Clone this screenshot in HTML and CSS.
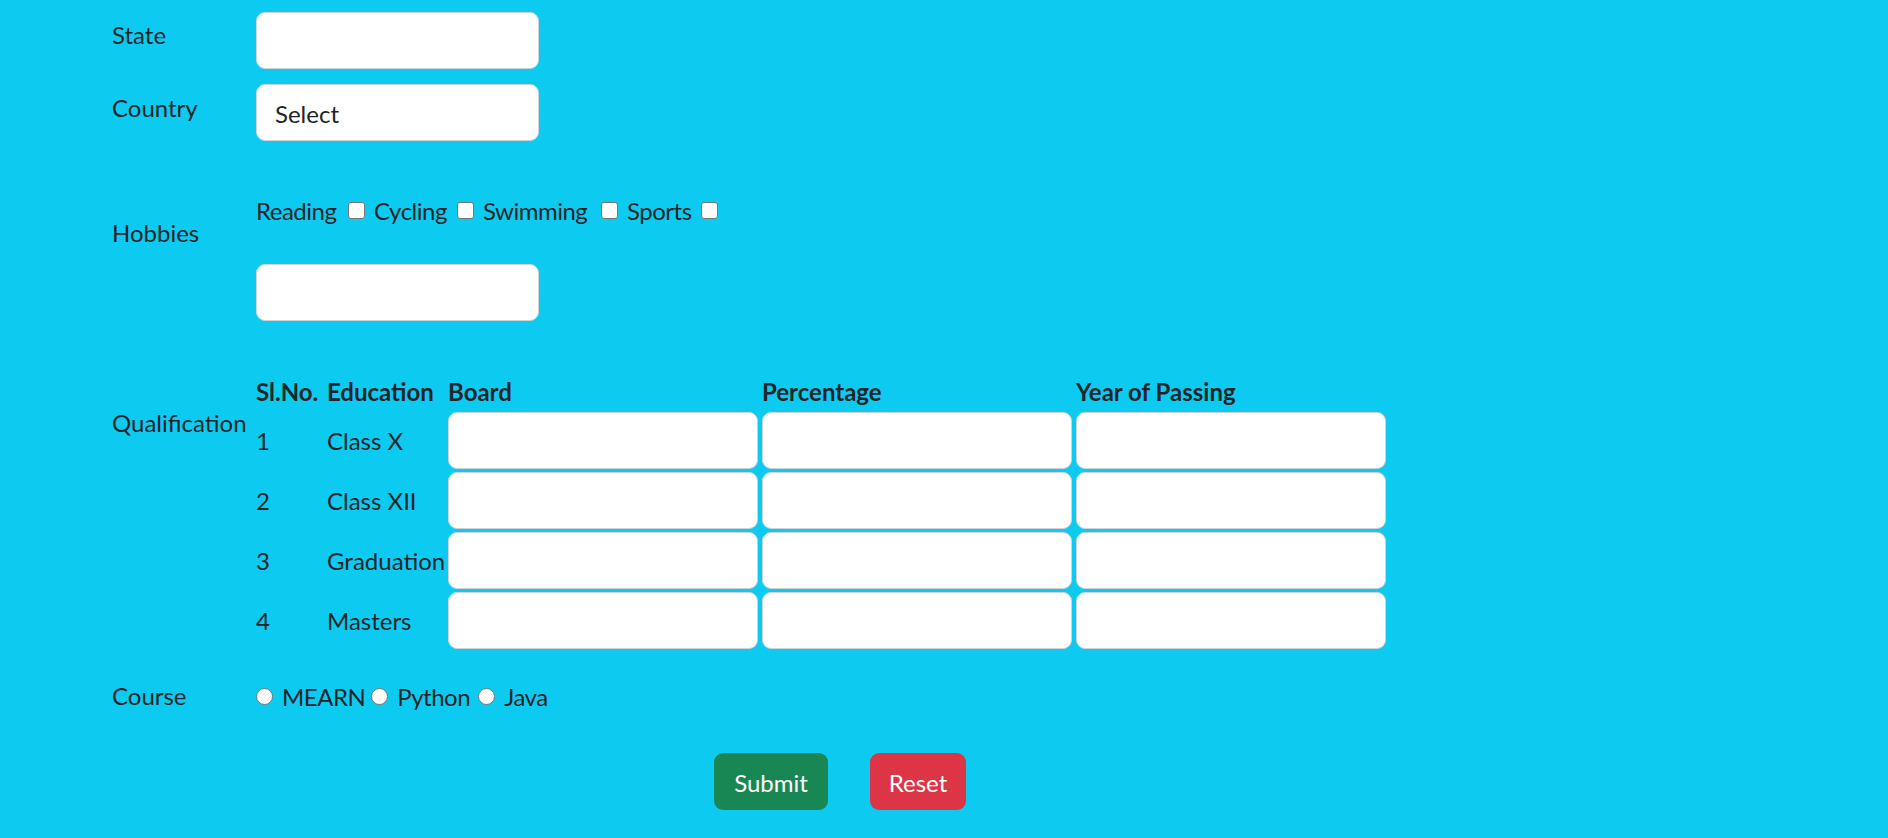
FILE: index.html
```html
<!DOCTYPE html>
<html lang="en">
<head>
<meta charset="utf-8">
<title>Registration Form</title>
<link rel="stylesheet" href="styles.css">
</head>
<body>
<form class="reg">
  <div class="row row-state">
    <label class="lbl">State</label>
    <div class="field"><input class="ctl" type="text"></div>
  </div>
  <div class="row row-country">
    <label class="lbl">Country</label>
    <div class="field">
      <select class="ctl sel"><option>Select</option></select>
    </div>
  </div>
  <div class="row row-hobbies">
    <label class="lbl">Hobbies</label>
    <div class="field">
      <div class="checks">
        <span class="opt w-reading">Reading</span><input type="checkbox" class="chk">
        <span class="opt w-cycling">Cycling</span><input type="checkbox" class="chk">
        <span class="opt w-swimming">Swimming</span><input type="checkbox" class="chk">
        <span class="opt w-sports">Sports</span><input type="checkbox" class="chk">
      </div>
      <input class="ctl hob-other" type="text">
    </div>
  </div>
  <div class="row row-qual">
    <label class="lbl">Qualification</label>
    <div class="qual">
      <div class="th">Sl.No.</div>
      <div class="th">Education</div>
      <div class="th">Board</div>
      <div class="th">Percentage</div>
      <div class="th">Year of Passing</div>

      <div class="td">1</div>
      <div class="td">Class X</div>
      <div class="tc"><input class="ctl wide" type="text"></div>
      <div class="tc"><input class="ctl wide" type="text"></div>
      <div class="tc"><input class="ctl wide" type="text"></div>

      <div class="td">2</div>
      <div class="td">Class XII</div>
      <div class="tc"><input class="ctl wide" type="text"></div>
      <div class="tc"><input class="ctl wide" type="text"></div>
      <div class="tc"><input class="ctl wide" type="text"></div>

      <div class="td">3</div>
      <div class="td">Graduation</div>
      <div class="tc"><input class="ctl wide" type="text"></div>
      <div class="tc"><input class="ctl wide" type="text"></div>
      <div class="tc"><input class="ctl wide" type="text"></div>

      <div class="td">4</div>
      <div class="td">Masters</div>
      <div class="tc"><input class="ctl wide" type="text"></div>
      <div class="tc"><input class="ctl wide" type="text"></div>
      <div class="tc"><input class="ctl wide" type="text"></div>
    </div>
  </div>
  <div class="row row-course">
    <label class="lbl">Course</label>
    <div class="radios">
      <input type="radio" name="course" class="rad"><span class="opt w-mearn">MEARN</span>
      <input type="radio" name="course" class="rad"><span class="opt w-python">Python</span>
      <input type="radio" name="course" class="rad"><span class="opt">Java</span>
    </div>
  </div>
  <div class="row row-btns">
    <button type="submit" class="btn btn-submit">Submit</button>
    <button type="reset" class="btn btn-reset">Reset</button>
  </div>
</form>
</body>
</html>
```
FILE: styles.css
```css
html, body {
  margin: 0;
  padding: 0;
}
body {
  background: #0dcaf0;
  color: #212529;
  font-family: Lato, "Open Sans", "Liberation Sans", sans-serif;
  font-size: 24px;
  line-height: 36px;
  min-height: 838px;
}
.reg {
  display: flex;
  flex-direction: column;
  padding: 12px 0 0 112px;
}
.row {
  display: flex;
  align-items: flex-start;
}
.lbl {
  width: 144px;
  flex: none;
  display: block;
}
.field {
  display: flex;
  flex-direction: column;
}
.ctl {
  display: block;
  box-sizing: border-box;
  width: 283px;
  height: 57px;
  margin: 0;
  padding: 2px 18px 0;
  border: 1px solid #ced4da;
  border-radius: 9px;
  background: #fff;
  color: #212529;
  font: inherit;
  outline: none;
}
.sel {
  appearance: none;
  -webkit-appearance: none;
}

.row-state .lbl { padding-top: 5px; }
.row-country { margin-top: 15px; }
.row-country .lbl { padding-top: 6px; }

.row-hobbies { margin-top: 51px; }
.row-hobbies .lbl { padding-top: 23px; }
.checks {
  display: flex;
  align-items: center;
  height: 36px;
  white-space: nowrap;
}
.opt {
  display: inline-block;
  flex: none;
  padding-top: 2px;
  letter-spacing: -0.5px;
  white-space: nowrap;
}
.w-reading { min-width: 83px; }
.w-cycling { min-width: 74px; }
.w-swimming { min-width: 109px; }
.w-sports { min-width: 65px; }
.w-mearn { min-width: 81px; }
.w-python { min-width: 75px; }
.chk {
  appearance: none;
  -webkit-appearance: none;
  box-sizing: border-box;
  flex: none;
  width: 17px;
  height: 17px;
  margin: 0 9px;
  border: 1.5px solid #767676;
  border-radius: 3px;
  background: #fff;
}
.hob-other { margin-top: 36px; }

.row-qual { margin-top: 51px; }
.row-qual .lbl { padding-top: 33px; }
.qual {
  display: grid;
  grid-template-columns: 71px 119px 314px 314px 314px;
  grid-template-rows: 38px repeat(4, 60px);
}
.th {
  font-weight: 700;
  padding: 2px 2px 0;
  white-space: nowrap;
}
.th:nth-child(1), .th:nth-child(2) { padding-left: 0; }
.td {
  align-self: center;
  padding-top: 2px;
  white-space: nowrap;
}
.tc {
  padding: 2px 2px 1px;
}
.wide { width: 310px; }

.row-course { margin-top: 28px; }
.radios {
  display: flex;
  align-items: center;
  height: 36px;
  white-space: nowrap;
}
.rad {
  appearance: none;
  -webkit-appearance: none;
  box-sizing: border-box;
  flex: none;
  width: 17px;
  height: 17px;
  margin: 0 9px 0 6px;
  border: 1.5px solid #767676;
  border-radius: 50%;
  background: #fff;
}
.rad:first-child { margin-left: 0; }

.row-btns {
  margin-top: 39px;
  padding-left: 602px;
}
.btn {
  box-sizing: border-box;
  height: 57px;
  border: 0;
  border-radius: 9px;
  color: #fff;
  font: inherit;
  padding: 2px 0 0;
  margin: 0;
  cursor: pointer;
}
.btn-submit {
  width: 114px;
  background: #198754;
}
.btn-reset {
  width: 96px;
  margin-left: 42px;
  background: #dc3545;
}
```
